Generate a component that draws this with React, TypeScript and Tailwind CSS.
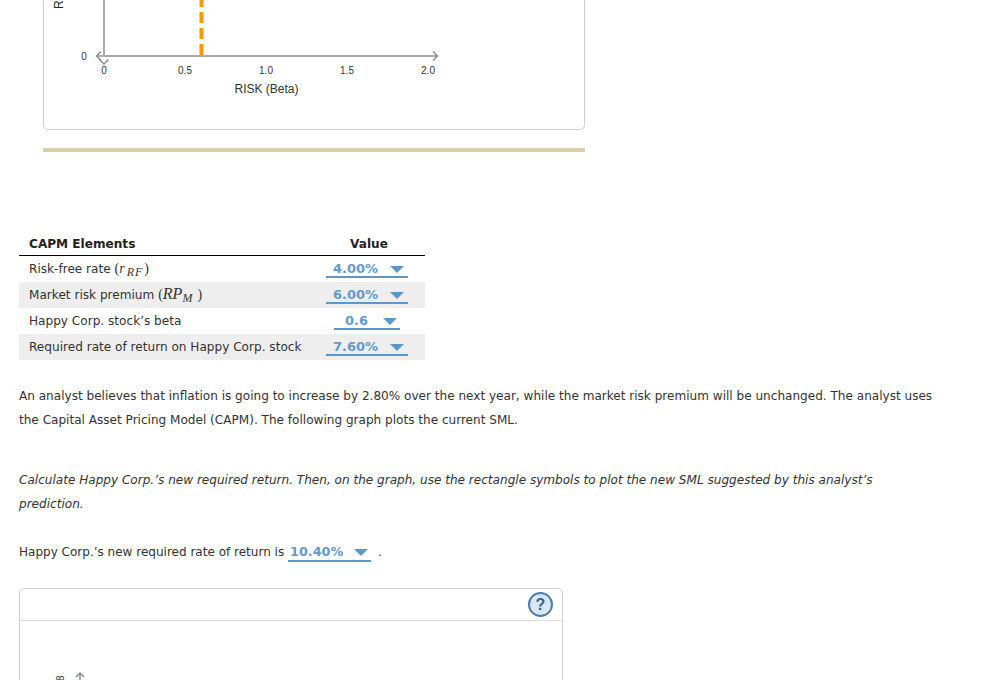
const blue = "text-[#6399cb]";

function Caret({ className = "" }: { className?: string }) {
  return (
    <svg width="14" height="7" viewBox="0 0 14 7" className={className}>
      <polygon points="0,0 14,0 7,7" fill="#5b97c9" />
    </svg>
  );
}

function Drop({ value, width, gap }: { value: string; width: string; gap: string }) {
  return (
    <span className={`inline-flex h-[20px] items-center border-b-[2px] border-[#5b97c9] pt-[4px] text-[13px] font-bold ${blue} ${width} ${gap}`}>
      <span>{value}</span>
      <Caret />
    </span>
  );
}

function M({ children }: { children: React.ReactNode }) {
  return <span className="font-['Liberation_Serif',serif] text-[14px] italic leading-none">{children}</span>;
}

function Paren({ children, className = "" }: { children: React.ReactNode; className?: string }) {
  return <span className={`font-['Liberation_Serif',serif] text-[14px] leading-none ${className}`}>{children}</span>;
}

function Chart() {
  return (
    <svg width="540" height="130" viewBox="44 0 540 130" className="block" style={{ fontFamily: "'Liberation Sans', sans-serif" }}>
      <text x="0" y="0" transform="translate(63 9) rotate(-90)" fontSize="12" fill="#222">R</text>
      <line x1="104" y1="0" x2="104" y2="56" stroke="#aaa" strokeWidth="2" />
      <line x1="201.500" y1="0" x2="201.500" y2="55" stroke="#f90" strokeWidth="4" strokeDasharray="11 5" strokeDashoffset="4" />
      <line x1="97" y1="56" x2="437" y2="56" stroke="#aaa" strokeWidth="2" />
      <path d="M101 51.500 L96.500 56 L101 60.500" fill="none" stroke="#888" strokeWidth="1.400" />
      <path d="M433 51.500 L437.500 56 L433 60.500" fill="none" stroke="#888" strokeWidth="1.400" />
      <path d="M99.500 59.500 L104 64 L108.500 59.500" fill="none" stroke="#888" strokeWidth="1.400" />
      <g fontSize="10" fill="#333" textAnchor="middle">
        <text x="84" y="60">0</text>
        <text x="104" y="74">0</text>
        <text x="185" y="74">0.5</text>
        <text x="266" y="74">1.0</text>
        <text x="347" y="74">1.5</text>
        <text x="428" y="74">2.0</text>
      </g>
      <text x="266.500" y="93" fontSize="12" fill="#333" textAnchor="middle">RISK (Beta)</text>
    </svg>
  );
}

const subClass = "text-[12px] leading-none tracking-[1px] align-baseline bottom-[-3px]";

const rows = [
  {
    label: (
      <>
        Risk-free rate <Paren>(</Paren>
        <M>
          <span className="mr-[2px]">r</span>
          <sub className={subClass}>RF</sub>
        </M>
        <Paren className="ml-[1px]">)</Paren>
      </>
    ),
    value: "4.00%",
    width: "w-[82px] pl-[7px]",
    gap: "gap-[12px]",
    shade: false,
  },
  {
    label: (
      <>
        Market risk premium <Paren>(</Paren>
        <M>
          <span className="text-[16px] leading-none">RP</span>
          <sub className={subClass}>M</sub>
        </M>
        <Paren className="ml-[4px]">)</Paren>
      </>
    ),
    value: "6.00%",
    width: "w-[82px] pl-[7px]",
    gap: "gap-[12px]",
    shade: true,
  },
  { label: <>Happy Corp. stock’s beta</>, value: "0.6", width: "w-[66px] pl-[11px]", gap: "gap-[15px]", shade: false },
  { label: <>Required rate of return on Happy Corp. stock</>, value: "7.60%", width: "w-[82px] pl-[7px]", gap: "gap-[12px]", shade: true },
];

export default function App() {
  return (
    <div className="h-[680px] overflow-hidden bg-white font-['DejaVu_Sans',sans-serif] text-[12.1px] text-[#333]">
      <div className="ml-[43px] w-[542px]">
        <div className="h-[130px] overflow-hidden rounded-b-[5px] border-x border-b border-[#cfcfcf]">
          <Chart />
        </div>
        <div className="mt-[18px] h-[4px] bg-[#d9cfa5]" />
      </div>

      <table className="ml-[19px] mt-[78px] w-[406px] border-separate border-spacing-0">
        <thead>
          <tr className="font-bold text-[#222]">
            <th className="h-[26px] border-b border-black pl-[10px] pt-[3px] text-left font-bold">CAPM Elements</th>
            <th className="h-[26px] w-[112px] border-b border-black pt-[3px] text-center font-bold">Value</th>
          </tr>
        </thead>
        <tbody>
          {rows.map((r, i) => (
            <tr key={i} className={r.shade ? "bg-[#eeeeee]" : ""}>
              <td className="h-[26px] whitespace-nowrap p-0 pl-[10px]">{r.label}</td>
              <td className="h-[26px] p-0">
                <div className="flex justify-center pb-[2px] pr-[4px]">
                  <Drop value={r.value} width={r.width} gap={r.gap} />
                </div>
              </td>
            </tr>
          ))}
        </tbody>
      </table>

      <p className="ml-[19px] mt-[24px] w-[918px] text-[12.07px] leading-[24px]">
        An analyst believes that inflation is going to increase by 2.80% over the next year, while the market risk premium will be unchanged. The analyst uses the Capital Asset Pricing Model (CAPM). The following graph plots the current SML.
      </p>
      <p className="ml-[19px] mt-[36px] w-[918px] text-[12.07px] italic leading-[24px]">
        Calculate Happy Corp.’s new required return. Then, on the graph, use the rectangle symbols to plot the new SML suggested by this analyst’s prediction.
      </p>
      <div className="ml-[19px] mt-[24px] flex h-[24px] items-center whitespace-pre text-[12.03px]">
        <span>Happy Corp.’s new required rate of return is </span>
        <span className={`inline-flex h-[20px] w-[83px] items-center gap-[11px] border-b-[2px] border-[#5b97c9] pl-[2px] pt-[2px] text-[12.8px] font-bold ${blue}`}>
          <span>10.40%</span>
          <Caret />
        </span>
        <span className="ml-[7px]">.</span>
      </div>

      <div className="ml-[19px] mt-[24px] h-[200px] w-[544px] rounded-t-[5px] border border-[#cfcfcf]">
        <div className="flex h-[32px] items-center justify-end border-b border-[#dedede] pr-[9px]">
          <span className="flex h-[25px] w-[25px] items-center justify-center rounded-full border-2 border-[#4b7dab] bg-[#dce6f0] font-['Liberation_Sans',sans-serif] text-[16px] font-bold leading-none text-[#2f6496]">?</span>
        </div>
        <svg width="80" height="70" viewBox="20 621 80 70" className="block" style={{ fontFamily: "'Liberation Sans', sans-serif" }}>
          <text x="0" y="0" transform="translate(64 681) rotate(-90)" fontSize="10" fill="#333">8</text>
          <line x1="80" y1="674" x2="80" y2="700" stroke="#aaa" strokeWidth="2" />
          <path d="M76 677 L80 673 L84 677" fill="none" stroke="#888" strokeWidth="1.400" />
        </svg>
      </div>
    </div>
  );
}
